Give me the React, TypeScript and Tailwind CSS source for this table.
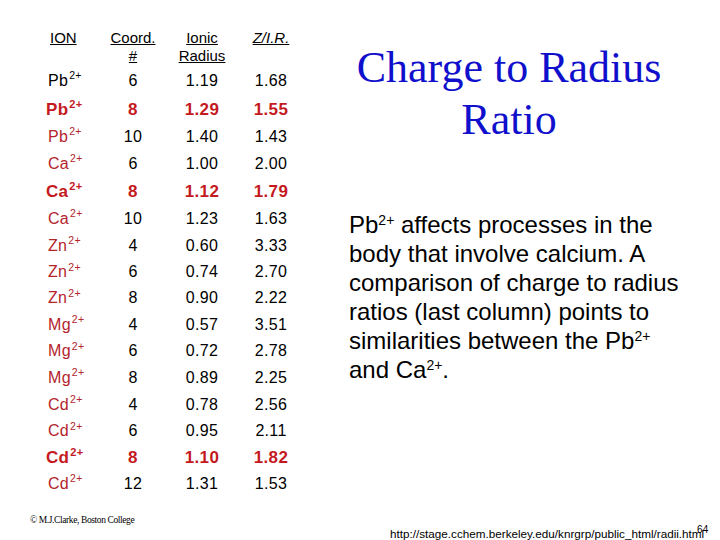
import React from "react";

type Row = { ion: string; cn: string; r: string; z: string; h: string; bold?: boolean; black?: boolean };

const rows: Row[] = [
  { ion: "Pb", cn: "6", r: "1.19", z: "1.68", h: "h-[29px]", black: true },
  { ion: "Pb", cn: "8", r: "1.29", z: "1.55", h: "h-[28px]", bold: true },
  { ion: "Pb", cn: "10", r: "1.40", z: "1.43", h: "h-[27px]" },
  { ion: "Ca", cn: "6", r: "1.00", z: "2.00", h: "h-[27px]" },
  { ion: "Ca", cn: "8", r: "1.12", z: "1.79", h: "h-[28px]", bold: true },
  { ion: "Ca", cn: "10", r: "1.23", z: "1.63", h: "h-[27px]" },
  { ion: "Zn", cn: "4", r: "0.60", z: "3.33", h: "h-[27px]" },
  { ion: "Zn", cn: "6", r: "0.74", z: "2.70", h: "h-[26px]" },
  { ion: "Zn", cn: "8", r: "0.90", z: "2.22", h: "h-[26px]" },
  { ion: "Mg", cn: "4", r: "0.57", z: "3.51", h: "h-[27px]" },
  { ion: "Mg", cn: "6", r: "0.72", z: "2.78", h: "h-[26px]" },
  { ion: "Mg", cn: "8", r: "0.89", z: "2.25", h: "h-[27px]" },
  { ion: "Cd", cn: "4", r: "0.78", z: "2.56", h: "h-[27px]" },
  { ion: "Cd", cn: "6", r: "0.95", z: "2.11", h: "h-[26px]" },
  { ion: "Cd", cn: "8", r: "1.10", z: "1.82", h: "h-[26px]", bold: true },
  { ion: "Cd", cn: "12", r: "1.31", z: "1.53", h: "h-[27px]" },
];

const arial = "font-['Liberation_Sans',Arial,sans-serif]";
const times = "font-['Liberation_Serif','Times_New_Roman',serif]";

export default function App() {
  return (
    <div className={`w-[720px] h-[540px] bg-white relative overflow-hidden ${arial}`}>
      <div className="flex">
        {/* table */}
        <div className="w-[330px] pl-[46px] pt-[29px]">
          <div className="grid grid-cols-[62px_50px_88px_50px] text-[15px] leading-[18px] text-black h-[37px]">
            <div className="pl-[4px] underline">ION</div>
            <div className="text-center">
              <div className="underline">Coord.</div>
              <div className="underline">#</div>
            </div>
            <div className="text-center">
              <div className="underline">Ionic</div>
              <div className="underline">Radius</div>
            </div>
            <div className="text-center italic underline">Z/I.R.</div>
          </div>
          {rows.map((row, i) => (
            <div
              key={i}
              className={`grid grid-cols-[62px_50px_88px_50px] ${row.h} items-center leading-none tracking-[0.3px] ${
                row.bold ? "text-[17px] font-bold text-[#c41a1f]" : "text-[16px] text-black"
              }`}
            >
              <div
                className={`${row.bold ? "pl-0" : "pl-[2px]"} ${
                  row.black ? "text-black" : row.bold ? "text-[#c41a1f]" : "text-[#b3242b]"
                }`}
              >
                {row.ion}
                <sup className={`${row.bold ? "text-[11px]" : "text-[10.5px]"} top-[-0.6em] ml-[1px]`}>2+</sup>
              </div>
              <div className="text-center">{row.cn}</div>
              <div className="text-center">{row.r}</div>
              <div className="text-center">{row.z}</div>
            </div>
          ))}
        </div>

        {/* right side */}
        <div className="flex-1 pt-[42px]">
          <h1 className={`${times} text-[44px] leading-[52px] text-[#1010cc] text-center w-[330px] ml-[14px]`}>
            Charge to Radius
            <br />
            Ratio
          </h1>
          <p className="mt-[64px] ml-[19px] w-[345px] text-[24px] leading-[29px] text-black">
            Pb<sup className="text-[14px] top-[-0.55em]">2+</sup> affects processes in the body that
            involve calcium. A comparison of charge to radius ratios (last column) points to
            similarities between the Pb<sup className="text-[14px] top-[-0.55em]">2+</sup> and Ca
            <sup className="text-[14px] top-[-0.55em]">2+</sup>.
          </p>
        </div>
      </div>

      {/* footer */}
      <div className={`absolute left-[30px] top-[513px] text-[9.5px] tracking-[-0.4px] ${times}`}>
        © M.J.Clarke, Boston College
      </div>
      <div className="absolute left-[390px] top-[525px] text-[11.7px] text-black">
        http://stage.cchem.berkeley.edu/knrgrp/public_html/radii.html
        <span className="absolute right-[-4px] top-[-3px] text-[10px]">64</span>
      </div>
    </div>
  );
}
